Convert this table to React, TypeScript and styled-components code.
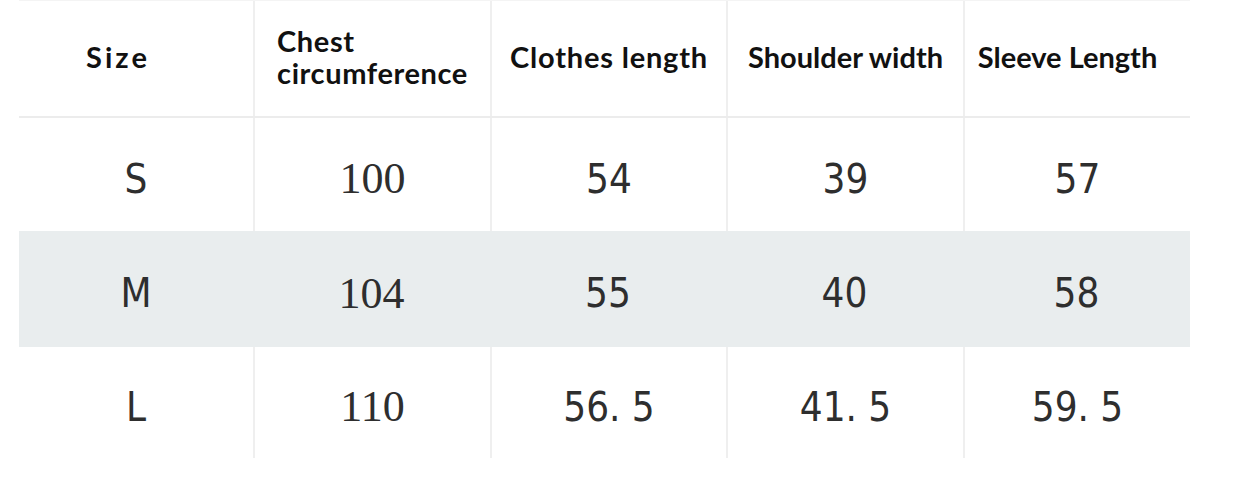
import React from 'react';
import styled, { createGlobalStyle } from 'styled-components';

const GlobalStyle = createGlobalStyle`
    html, body {
        margin: 0;
        padding: 0;
        background: #ffffff;
    }
`;

const Page = styled.main`
    width: 1236px;
    height: 494px;
    overflow: hidden;
    padding-left: 19px;
    box-sizing: border-box;
    background: #ffffff;
`;

const Table = styled.div`
    width: 1171px;
    border-top: 1px solid #f4f4f4;
`;

const Row = styled.div<{ $height: number; $shaded?: boolean; $divider?: boolean }>`
    display: grid;
    grid-template-columns: 234px 237px 236px 237px 227px;
    height: ${(p) => p.$height}px;
    background: ${(p) => (p.$shaded ? '#e9edee' : 'transparent')};
    border-bottom: ${(p) => (p.$divider ? '2px solid #ececec' : 'none')};
`;

const HeaderCell = styled.div<{ $first?: boolean; $shift?: number; $spacing?: number }>`
    display: flex;
    align-items: center;
    justify-content: center;
    padding-right: ${(p) => p.$shift ?? 0}px;
    padding-bottom: 4px;
    border-left: ${(p) => (p.$first ? 'none' : '2px solid #efefef')};
    font-family: Lato, 'Liberation Sans', sans-serif;
    font-weight: 700;
    font-size: 29px;
    line-height: 32px;
    color: #111111;
    letter-spacing: ${(p) => p.$spacing ?? 0}px;
`;

const HeaderText = styled.span`
    text-align: left;
`;

const Cell = styled.div<{ $first?: boolean; $shaded?: boolean; $serif?: boolean }>`
    display: flex;
    align-items: center;
    justify-content: center;
    padding-top: 8px;
    box-sizing: border-box;
    border-left: ${(p) => (p.$first || p.$shaded ? 'none' : '2px solid #efefef')};
    font-family: ${(p) => (p.$serif ? "'Liberation Serif', serif" : "'DejaVu Sans Condensed', 'Liberation Sans', sans-serif")};
    font-size: ${(p) => (p.$serif ? 44 : 40)}px;
    color: #2e2e2e;
    white-space: pre;
`;

const headers = [
    { text: 'Size', shift: 36, spacing: 3 },
    { text: 'Chest\ncircumference', shift: 0, spacing: 0.6 },
    { text: 'Clothes length', shift: 0, spacing: 0.8 },
    { text: 'Shoulder width', shift: 0, spacing: 0 },
    { text: 'Sleeve Length', shift: 20, spacing: 0 },
];

const rows = [
    { height: 113, shaded: false, values: ['S', '100', '54', '39', '57'] },
    { height: 116, shaded: true, values: ['M', '104', '55', '40', '58'] },
    { height: 111, shaded: false, values: ['L', '110', '56. 5', '41. 5', '59. 5'] },
];

const App: React.FC = () => {
    return (
        <Page>
            <GlobalStyle />
            <Table>
                <Row $height={115} $divider>
                    {headers.map((h, i) => (
                        <HeaderCell key={h.text} $first={i === 0} $shift={h.shift} $spacing={h.spacing}>
                            <HeaderText>
                                {h.text.split('\n').map((line) => (
                                    <div key={line}>{line}</div>
                                ))}
                            </HeaderText>
                        </HeaderCell>
                    ))}
                </Row>
                {rows.map((r) => (
                    <Row key={r.values[0]} $height={r.height} $shaded={r.shaded}>
                        {r.values.map((v, i) => (
                            <Cell key={i} $first={i === 0} $shaded={r.shaded} $serif={i === 1}>
                                {v}
                            </Cell>
                        ))}
                    </Row>
                ))}
            </Table>
        </Page>
    );
};

export default App;
